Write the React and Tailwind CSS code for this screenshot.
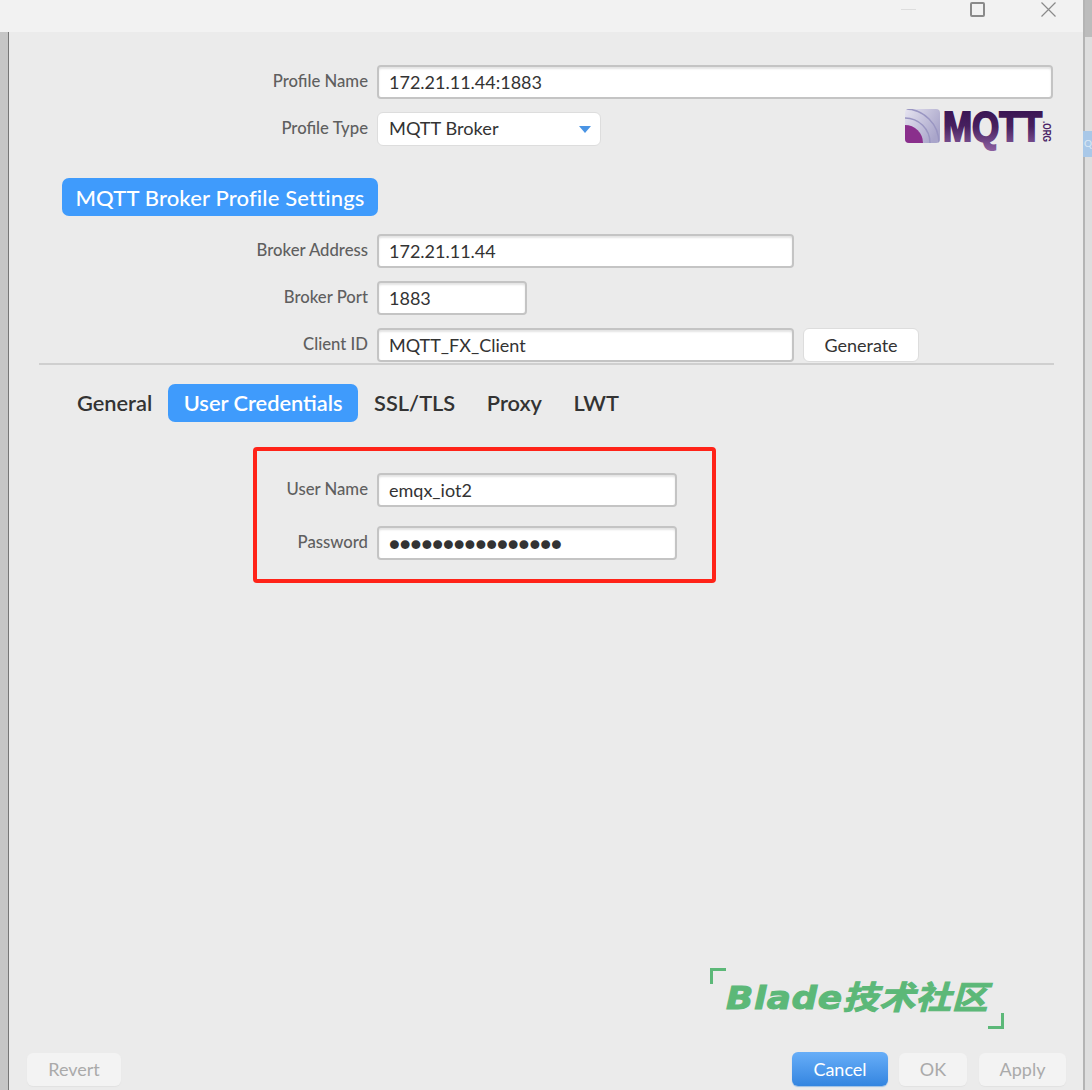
const font = "font-['Lato','Noto_Sans',sans-serif]";

const Field = ({ label, value, width, action }) => (
  <div className="flex items-center">
    <div className="w-[359px] text-right text-[16.7px] font-medium text-[#5f5f5f]">{label}</div>
    <div className={`ml-[9px] flex h-[34px] items-center rounded-[4px] border-2 border-[#c4c4c4] bg-white pl-[10px] text-[18px] text-[#333] shadow-[inset_0_2px_2px_#e4e4e4] ${width}`}>
      {value}
    </div>
    {action}
  </div>
);

const MqttLogo = () => (
  <svg width="148" height="38" viewBox="0 0 148 38" className="overflow-visible">
    <defs>
      <linearGradient id="tile" x1="0" y1="0" x2="1" y2="0.6">
        <stop offset="0" stopColor="#e6e4f0" />
        <stop offset="1" stopColor="#a9a5ca" />
      </linearGradient>
      <linearGradient id="letters" x1="0" y1="0" x2="0" y2="1">
        <stop offset="0" stopColor="#340f4e" />
        <stop offset="0.5" stopColor="#47205f" />
        <stop offset="1" stopColor="#8a5f9f" />
      </linearGradient>
      <clipPath id="tileClip">
        <rect width="35" height="34" rx="4" />
      </clipPath>
    </defs>
    <g clipPath="url(#tileClip)">
      <rect width="35" height="34" fill="url(#tile)" />
      <circle cx="0" cy="34" r="18" fill="#8a2f8c" />
      <circle cx="0" cy="34" r="25" fill="none" stroke="#9a96c2" strokeWidth="1.5" />
      <circle cx="0" cy="34" r="34" fill="none" stroke="#9a96c2" strokeWidth="1.5" />
    </g>
    <text
      x="38"
      y="32"
      fontFamily="'Liberation Sans', sans-serif"
      fontWeight="700"
      fontSize="42"
      textLength="99"
      lengthAdjust="spacingAndGlyphs"
      fill="url(#letters)"
      stroke="url(#letters)"
      strokeWidth="2"
    >
      MQTT
    </text>
    <text
      x="0"
      y="0"
      transform="translate(138 12) rotate(90)"
      fontFamily="'Liberation Sans', sans-serif"
      fontWeight="700"
      fontSize="11.5"
      textLength="21"
      lengthAdjust="spacingAndGlyphs"
      fill="#4a1f66"
    >
      .ORG
    </text>
  </svg>
);

const Tab = ({ children, active }) => (
  <div className={`flex h-[38px] items-center rounded-[7px] px-[15.5px] text-[21.8px] font-semibold ${active ? 'bg-[#3f9bfc] text-white' : 'text-[#333]'}`}>
    {children}
  </div>
);

const DisabledButton = ({ children, width }) => (
  <div className={`flex h-[33px] items-center justify-center rounded-[6px] bg-[#f3f3f3] text-[18px] text-[#aaa] shadow-[0_1px_1px_#e2e2e2] ${width}`}>
    {children}
  </div>
);

export default function App() {
  return (
    <div className={`relative flex h-[1090px] w-[1092px] overflow-hidden bg-white ${font}`}>
      <div className="relative flex h-full w-[1083px] flex-col">
        {/* title bar */}
        <div className="flex h-[32px] shrink-0 items-start justify-end bg-[#f2f2f2] pt-[2px] pr-[27px]">
          <div className="mt-[7px] mr-[54px] h-px w-[15px] bg-[#ddd]" />
          <div className="mr-[56px] h-[15px] w-[15px] rounded-[2px] border-2 border-[#8a8a8a]" />
          <svg width="15" height="15" viewBox="0 0 15 15" stroke="#8a8a8a" strokeWidth="1.2">
            <path d="M0.5 0.5 L14.5 14.5 M14.5 0.5 L0.5 14.5" />
          </svg>
        </div>

        <div className="flex min-h-0 flex-1">
          {/* edge of the window behind */}
          <div className="w-[9px] shrink-0 border-r-[1.5px] border-[#777] bg-[#c6c6c6]" />

          <div className="flex min-w-0 flex-1 flex-col bg-[#ebebeb]">
            <div className="pt-[33px]">
              <Field label="Profile Name" value="172.21.11.44:1883" width="w-[676px]" />
              <div className="mt-[13px] flex h-[34px] items-center">
                <div className="w-[359px] text-right text-[16.7px] font-medium text-[#5f5f5f]">Profile Type</div>
                <div className="ml-[9px] flex h-[34px] w-[224px] items-center justify-between rounded-[6px] border border-[#ddd] bg-white pr-[9px] pl-[11px] text-[18.2px] text-[#333]">
                  MQTT Broker
                  <svg width="12" height="7" viewBox="0 0 12 7">
                    <path d="M0 0 H12 L6 7 Z" fill="#4a94e4" />
                  </svg>
                </div>
                <div className="mt-[-2px] mr-[30px] ml-auto">
                  <MqttLogo />
                </div>
              </div>
            </div>

            <div className="mt-[32px] ml-[53px] flex h-[38px] w-[316px] items-center justify-center rounded-[7px] bg-[#3f9bfc] text-[22px] font-medium tracking-[0.15px] text-white">
              MQTT Broker Profile Settings
            </div>

            <div className="mt-[18px] flex flex-col gap-[13px]">
              <Field label="Broker Address" value="172.21.11.44" width="w-[417px]" />
              <Field label="Broker Port" value="1883" width="w-[150px]" />
              <Field
                label="Client ID"
                value="MQTT_FX_Client"
                width="w-[417px]"
                action={
                  <div className="ml-[9px] flex h-[34px] w-[116px] items-center justify-center rounded-[6px] border border-[#ddd] bg-white text-[18px] text-[#333]">
                    Generate
                  </div>
                }
              />
            </div>

            <div className="mt-[1px] mr-[29px] ml-[30px] h-[2px] bg-[#cfcfcf]" />

            <div className="mt-[19px] ml-[52.5px] flex gap-[0.5px]">
              <Tab>General</Tab>
              <Tab active>User Credentials</Tab>
              <Tab>SSL/TLS</Tab>
              <Tab>Proxy</Tab>
              <Tab>LWT</Tab>
            </div>

            <div className="mt-[51px] flex flex-col gap-[19px]">
              <Field label="User Name" value="emqx_iot2" width="w-[300px]" />
              <Field
                label="Password"
                value={<span className="text-[18px]">●●●●●●●●●●●●●●●●</span>}
                width="w-[300px]"
              />
            </div>

            <div className="mt-auto mb-[4px] flex items-center pr-[17px] pl-[18px]">
              <DisabledButton width="w-[94px]">Revert</DisabledButton>
              <div className="ml-auto flex h-[34px] w-[96px] items-center justify-center rounded-[6px] bg-gradient-to-b from-[#67aef8] to-[#3385e0] text-[18px] text-white shadow-[0_1px_1px_#9bbfe6]">
                Cancel
              </div>
              <DisabledButton width="ml-[11px] w-[68px]">OK</DisabledButton>
              <DisabledButton width="ml-[12px] w-[87px]">Apply</DisabledButton>
            </div>
          </div>
        </div>

        {/* annotation drawn over the screenshot */}
        <div className="absolute top-[447px] left-[253px] h-[136px] w-[463px] rounded-[4px] border-[4px] border-[#ff2318]" />

        {/* watermark */}
        <div className="absolute top-[968px] left-[710px] h-[16px] w-[16px] border-t-[3px] border-l-[3px] border-[#5cb878]" />
        <div className="absolute top-[1013px] left-[988px] h-[16px] w-[16px] border-r-[3px] border-b-[3px] border-[#5cb878]" />
        <div className="absolute top-[978px] left-[726px] origin-left scale-x-[1.12] font-['DejaVu_Sans','Noto_Sans_CJK_SC',sans-serif] text-[32px] leading-[40px] font-bold tracking-[0.5px] whitespace-nowrap text-[#5cb878] italic [-webkit-text-stroke:1px_#5cb878]">
          Blade技术社区
        </div>
      </div>

      {/* window behind, right of the dialog */}
      <div className="relative flex-1 border-l-2 border-[#b4b4b4] bg-[#dedede]">
        <div className="h-[37px] bg-[#bcbcbc]" />
        <div className="absolute top-[131px] -left-[2px] h-[26px] w-[9px] bg-[#a9c8e8] pt-[4px] pl-px text-[10px] leading-[16px] text-[#dbe8f5]">Q</div>
      </div>
    </div>
  );
}
